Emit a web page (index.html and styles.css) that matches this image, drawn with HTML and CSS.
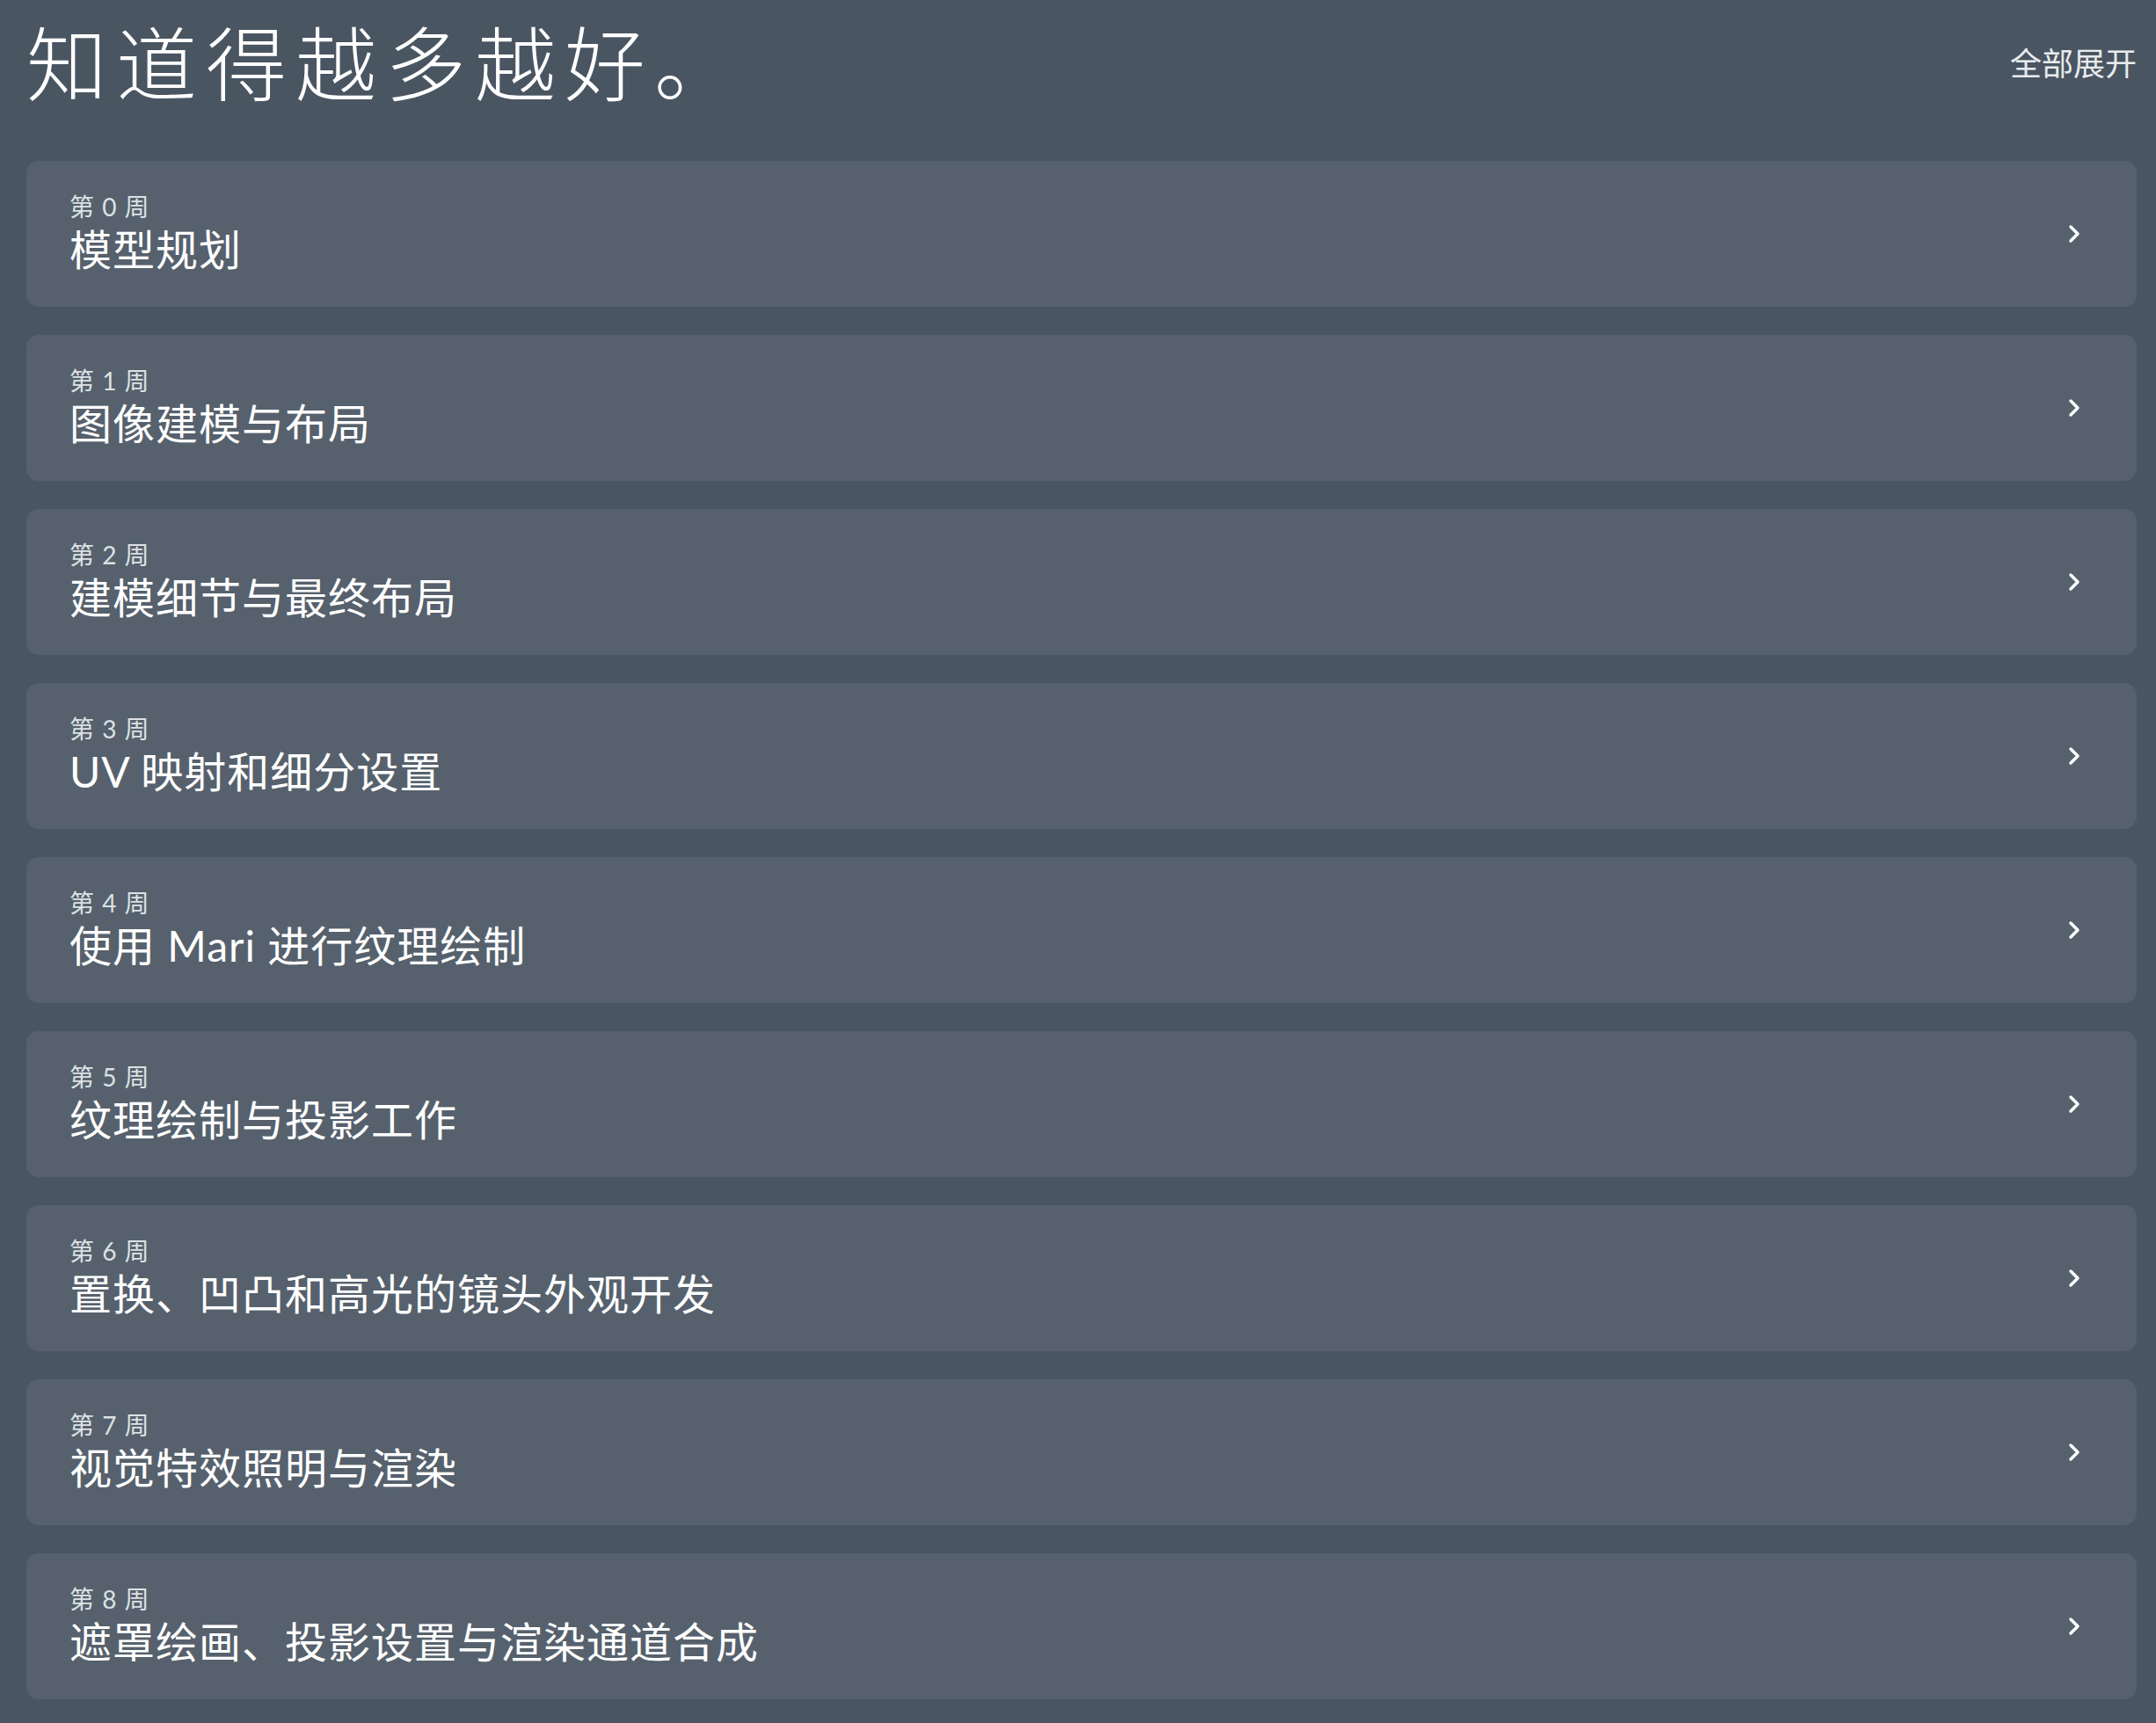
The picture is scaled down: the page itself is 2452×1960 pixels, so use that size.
FILE: index.html
```html
<!DOCTYPE html>
<html lang="zh-CN">
<head>
  <meta charset="UTF-8">
  <meta name="viewport" content="width=device-width, initial-scale=1.0">
  <title>课程大纲</title>
  <link rel="stylesheet" href="styles.css">
</head>
<body>
  <div id="syllabus">
    <header class="syllabus-header">
      <h1>知道得越多越好。</h1>
      <button class="expand-all">全部展开</button>
    </header>

    <ul class="week-list">
      <li class="week-card">
        <div class="week-text">
          <span class="week-label">第 0 周</span>
          <span class="week-title">模型规划</span>
        </div>
        <svg class="chevron" viewBox="0 0 14 22"><path d="M3 3l8 8-8 8"/></svg>
      </li>
      <li class="week-card">
        <div class="week-text">
          <span class="week-label">第 1 周</span>
          <span class="week-title">图像建模与布局</span>
        </div>
        <svg class="chevron" viewBox="0 0 14 22"><path d="M3 3l8 8-8 8"/></svg>
      </li>
      <li class="week-card">
        <div class="week-text">
          <span class="week-label">第 2 周</span>
          <span class="week-title">建模细节与最终布局</span>
        </div>
        <svg class="chevron" viewBox="0 0 14 22"><path d="M3 3l8 8-8 8"/></svg>
      </li>
      <li class="week-card">
        <div class="week-text">
          <span class="week-label">第 3 周</span>
          <span class="week-title">UV 映射和细分设置</span>
        </div>
        <svg class="chevron" viewBox="0 0 14 22"><path d="M3 3l8 8-8 8"/></svg>
      </li>
      <li class="week-card">
        <div class="week-text">
          <span class="week-label">第 4 周</span>
          <span class="week-title">使用 Mari 进行纹理绘制</span>
        </div>
        <svg class="chevron" viewBox="0 0 14 22"><path d="M3 3l8 8-8 8"/></svg>
      </li>
      <li class="week-card">
        <div class="week-text">
          <span class="week-label">第 5 周</span>
          <span class="week-title">纹理绘制与投影工作</span>
        </div>
        <svg class="chevron" viewBox="0 0 14 22"><path d="M3 3l8 8-8 8"/></svg>
      </li>
      <li class="week-card">
        <div class="week-text">
          <span class="week-label">第 6 周</span>
          <span class="week-title">置换、凹凸和高光的镜头外观开发</span>
        </div>
        <svg class="chevron" viewBox="0 0 14 22"><path d="M3 3l8 8-8 8"/></svg>
      </li>
      <li class="week-card">
        <div class="week-text">
          <span class="week-label">第 7 周</span>
          <span class="week-title">视觉特效照明与渲染</span>
        </div>
        <svg class="chevron" viewBox="0 0 14 22"><path d="M3 3l8 8-8 8"/></svg>
      </li>
      <li class="week-card">
        <div class="week-text">
          <span class="week-label">第 8 周</span>
          <span class="week-title">遮罩绘画、投影设置与渲染通道合成</span>
        </div>
        <svg class="chevron" viewBox="0 0 14 22"><path d="M3 3l8 8-8 8"/></svg>
      </li>
    </ul>
  </div>
</body>
</html>
```

FILE: styles.css
```css
body {
  margin: 0;
  background-color: #4a5562;
  color: #fff;
  font-family: Lato, "Noto Sans CJK SC", sans-serif;
}
#syllabus {
  padding: 0 22px 0 30px;
}
.syllabus-header {
  display: flex;
  justify-content: space-between;
  align-items: center;
  height: 151px;
}
.syllabus-header h1 {
  margin: -6px 0 0;
  font-size: 92px;
  font-weight: 300;
  line-height: 1;
  letter-spacing: 10px;
}
.expand-all {
  border: none;
  background: none;
  padding: 0;
  color: #e8ebee;
  font-family: inherit;
  font-size: 36px;
  cursor: pointer;
  margin-top: -12px;
}
.week-list {
  list-style: none;
  margin: 32px 0 0;
  padding: 0;
  display: flex;
  flex-direction: column;
  gap: 32px;
}
.week-card {
  display: flex;
  align-items: center;
  justify-content: space-between;
  height: 166px;
  box-sizing: border-box;
  padding: 0 64px 0 49px;
  border-radius: 14px;
  background-color: #56616d;
}
.week-text {
  display: flex;
  flex-direction: column;
  gap: 2px;
}
.week-label {
  font-size: 28px;
  line-height: 34px;
  letter-spacing: 1px;
  color: #dde1e5;
}
.week-title {
  font-size: 48px;
  line-height: 60px;
  letter-spacing: 1px;
}
.chevron {
  width: 14px;
  height: 22px;
  fill: none;
  stroke: #fff;
  stroke-width: 3.5;
  stroke-linecap: round;
  stroke-linejoin: round;
}
```
